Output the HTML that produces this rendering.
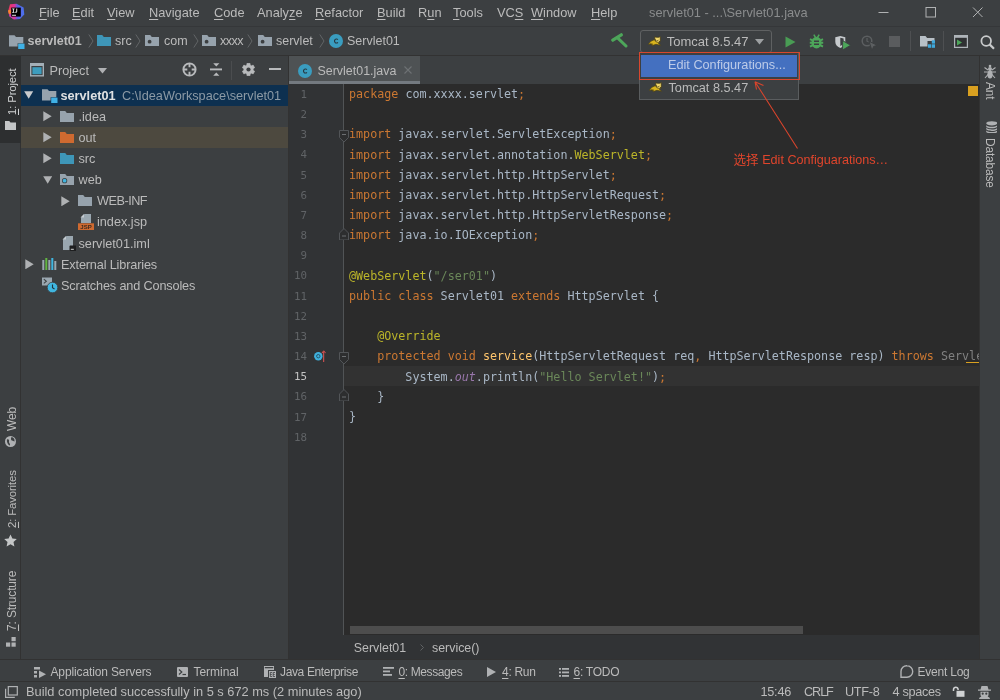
<!DOCTYPE html>
<html lang="en">
<head>
<meta charset="utf-8">
<title>servlet01 - Servlet01.java</title>
<style>
*{box-sizing:border-box;margin:0;padding:0}
html,body{width:1000px;height:700px;overflow:hidden;background:#3c3f41}
body{position:relative;font-family:"Liberation Sans","Noto Sans CJK SC",sans-serif;font-size:12.7px;color:#bbbbbb;-webkit-font-smoothing:antialiased}
#root{position:absolute;left:0;top:0;width:1000px;height:700px;will-change:transform}
.abs{position:absolute}
.t{position:absolute;white-space:pre;line-height:16px;height:16px}
u{text-decoration:underline;text-underline-offset:2px;text-decoration-thickness:1px}
/* menu */
#menubar{left:0;top:0;width:1000px;height:26px;background:#3c3f41}
#menubar .t{top:5px;font-size:12.8px;color:#bbbbbb}
/* navbar */
#navbar{left:0;top:26px;width:1000px;height:30px;background:#3c3f41;border-top:1px solid #353739;border-bottom:1px solid #323232}
#navbar .t{top:6px;font-size:12.5px}
/* stripes */
#lstripe{left:0;top:56px;width:21px;height:603px;background:#3c3f41;border-right:1px solid #323232}
#rstripe{left:979px;top:56px;width:21px;height:603px;background:#3c3f41;border-left:1px solid #323232}
.vt{position:absolute;white-space:pre;font-size:11.4px;letter-spacing:-0.15px;line-height:16px;height:16px;transform-origin:0 0}
/* project */
#proj{left:21px;top:56px;width:267px;height:603px;background:#3c3f41}
#projhead{left:0;top:0;width:267px;height:28px;background:#3c3f41}
.row{position:absolute;left:0;width:267px;height:21px}
.row .t{top:3px}
/* editor */
#editor{left:288px;top:56px;width:691px;height:603px;background:#2b2b2b;border-left:1px solid #323232}
#tabs{left:0;top:0;width:691px;height:28px;background:#3c3f41}
#gutter{left:0;top:28px;width:54px;height:551px;background:#313335}
#gline{left:54px;top:28px;width:1px;height:551px;background:#515456}
#code{left:0;top:28px;width:691px;height:552px;font-family:"DejaVu Sans Mono","Liberation Mono",monospace;font-size:11.71px;color:#a9b7c6}
.ln{position:absolute;left:0;width:690px;height:20px;line-height:20px;white-space:pre}
.ln i{position:absolute;left:5px;top:0.7px;font-style:normal;color:#606366;font-size:10.8px}
.ln b{position:absolute;left:60px;top:0;font-weight:normal}
.k{color:#cc7832}.a{color:#bbb529}.s{color:#6a8759}.f{color:#ffc66d}.p{color:#9876aa;font-style:italic}.g{color:#808080}
/* bottom */
#crumbs{left:0;top:579px;width:691px;height:24px;background:#313335}
#crumbs .t{font-size:12.4px}
#tabs .t{font-size:12.45px}
#toolbar{left:0;top:659px;width:1000px;height:22px;background:#3c3f41;border-top:1px solid #323232}
#toolbar .t{top:4px;font-size:12px;letter-spacing:-0.28px}
#status{left:0;top:681px;width:1000px;height:19px;background:#3c3f41;border-top:1px solid #323232}
#status .t{top:2px}
</style>
</head>
<body>
<div id="root">
<div id="menubar" class="abs">
<svg class="abs" style="left:0;top:0" width="32" height="26" viewBox="0 0 32 26"><defs><linearGradient id="lg1" x1="0" y1="0" x2="1" y2="0"><stop offset="0" stop-color="#f23a55"/><stop offset=".4" stop-color="#d9349a"/><stop offset=".58" stop-color="#5b60e2"/><stop offset="1" stop-color="#4a74ee"/></linearGradient></defs><path d="M10 4.300L16.500 3.700L23.600 7.600L24.300 14.600L20 19L14 19.500L9.600 16.600L8 11.500z" fill="url(#lg1)"/><path d="M8 10.600L10.600 9.400L11.200 13.600L9 14.200z" fill="#f58a2e"/><path d="M9 14.200L11.200 13.600L14 19.500L9.600 16.600z" fill="#c13cb0"/><rect x="11.200" y="7.600" width="9.600" height="9" fill="#000"/><rect x="12.100" y="14.800" width="3.900" height="0.900" fill="#fff"/><path d="M12.200 8.500h2.300v.8h-.7v2.600h.7v.8h-2.300v-.8h.7V9.300h-.7z" fill="#fff"/><path d="M16.300 8.500h.9v3c0 .8-.5 1.200-1.200 1.200-.5 0-.9-.2-1.100-.5l.5-.6c.2.200.3.300.6.300.2 0 .3-.2.300-.5z" fill="#fff"/></svg>
<span class="t" style="left:39px"><u>F</u>ile</span>
<span class="t" style="left:72px"><u>E</u>dit</span>
<span class="t" style="left:107px"><u>V</u>iew</span>
<span class="t" style="left:149px"><u>N</u>avigate</span>
<span class="t" style="left:214px"><u>C</u>ode</span>
<span class="t" style="left:257px">Analy<u>z</u>e</span>
<span class="t" style="left:315px"><u>R</u>efactor</span>
<span class="t" style="left:377px"><u>B</u>uild</span>
<span class="t" style="left:418px">R<u>u</u>n</span>
<span class="t" style="left:453px"><u>T</u>ools</span>
<span class="t" style="left:497px">VC<u>S</u></span>
<span class="t" style="left:531px"><u>W</u>indow</span>
<span class="t" style="left:591px"><u>H</u>elp</span>
<span class="t" id="wtitle" style="left:649px;color:#8a8c8d;font-size:12.8px">servlet01 - ...\Servlet01.java</span>
<svg class="abs" style="left:870px;top:0" width="130" height="26" viewBox="0 0 130 26" fill="none" stroke="#b0b2b3" stroke-width="1"><path d="M8.500 12.500h10"/><rect x="56" y="7.500" width="9.500" height="9.500"/><path d="M103 7.500l9.500 9.500M112.500 7.500l-9.500 9.500"/></svg>
</div>
<div id="navbar" class="abs">
<svg class="abs" style="left:9px;top:6.5px" width="16" height="15" viewBox="0 0 16 15" ><path d="M0 1.300h5.500l1.500 1.800H14.300v6.200H8.600v3.200H0z" fill="#97a3ad"/><rect x="9.200" y="9.600" width="6.300" height="5.400" fill="#3fb1e6"/></svg>
<span class="t" style="left:27.500px;font-weight:bold">servlet01</span>
<svg class="abs" style="left:87.5px;top:7px" width="6" height="14" viewBox="0 0 6 14" ><path d="M0.800 0.500L5 7L0.800 13.500" fill="none" stroke="#626567" stroke-width="1"/></svg>
<svg class="abs" style="left:97px;top:8px" width="14" height="11" viewBox="0 0 14 11" ><path d="M0 0h5.200l1.600 2H14v9H0z" fill="#3e96b8"/></svg>
<span class="t" style="left:115px">src</span>
<svg class="abs" style="left:134.5px;top:7px" width="6" height="14" viewBox="0 0 6 14" ><path d="M0.800 0.500L5 7L0.800 13.500" fill="none" stroke="#626567" stroke-width="1"/></svg>
<svg class="abs" style="left:145px;top:8px" width="14" height="11" viewBox="0 0 14 11" ><path d="M0 0h5.200l1.600 2H14v9H0z" fill="#97a3ad"/><circle cx="4.600" cy="6.700" r="1.900" fill="#3c3f41"/></svg>
<span class="t" style="left:164px">com</span>
<svg class="abs" style="left:192.5px;top:7px" width="6" height="14" viewBox="0 0 6 14" ><path d="M0.800 0.500L5 7L0.800 13.500" fill="none" stroke="#626567" stroke-width="1"/></svg>
<svg class="abs" style="left:202px;top:8px" width="14" height="11" viewBox="0 0 14 11" ><path d="M0 0h5.200l1.600 2H14v9H0z" fill="#97a3ad"/><circle cx="4.600" cy="6.700" r="1.900" fill="#3c3f41"/></svg>
<span class="t" style="left:220px;letter-spacing:-0.500px">xxxx</span>
<svg class="abs" style="left:247px;top:7px" width="6" height="14" viewBox="0 0 6 14" ><path d="M0.800 0.500L5 7L0.800 13.500" fill="none" stroke="#626567" stroke-width="1"/></svg>
<svg class="abs" style="left:257.5px;top:8px" width="14" height="11" viewBox="0 0 14 11" ><path d="M0 0h5.200l1.600 2H14v9H0z" fill="#97a3ad"/><circle cx="4.600" cy="6.700" r="1.900" fill="#3c3f41"/></svg>
<span class="t" style="left:276px">servlet</span>
<svg class="abs" style="left:319px;top:7px" width="6" height="14" viewBox="0 0 6 14" ><path d="M0.800 0.500L5 7L0.800 13.500" fill="none" stroke="#626567" stroke-width="1"/></svg>
<svg class="abs" style="left:328.5px;top:7px" width="14" height="14" viewBox="0 0 14 14" ><circle cx="7" cy="7" r="7" fill="#3a9dc0"/><path d="M9.300 8.700c-.5.600-1.100.9-1.900.9-1.400 0-2.400-1.100-2.400-2.600s1-2.600 2.400-2.600c.8 0 1.400.3 1.900.8l-.7.800c-.3-.4-.7-.5-1.200-.5-.8 0-1.300.7-1.300 1.500s.5 1.500 1.300 1.500c.5 0 .9-.2 1.200-.6z" fill="#26343b"/></svg>
<span class="t" style="left:347px">Servlet01</span>
<svg class="abs" style="left:611px;top:6px" width="17" height="16" viewBox="0 0 17 16" ><path d="M1.800 7.200L10.300 1.800" stroke="#4da65a" stroke-width="3.200" stroke-linecap="round"/><path d="M6.300 4.700L15 13" stroke="#4da65a" stroke-width="3" stroke-linecap="round"/></svg>
<div class="abs" style="left:640px;top:3.1999999999999993px;width:131.500px;height:22.500px;border:1px solid #5f6162;border-radius:3px;background:#3c3f41"></div>
<svg class="abs" style="left:648.3px;top:9.200000000000003px" width="13.5" height="10" viewBox="0 0 13.5 10" ><path d="M0.300 8.300L2.800 5.300L6.600 3.600L12.300 5.800L10.300 7L12.500 9.300L8 8.300L4.200 9.600L3 8z" fill="#d8b41e" stroke="#4d4214" stroke-width=".7" stroke-linejoin="round"/><path d="M6.800 0.800L8.300 1.300L10.800 1.300L12.300 0.600L12.300 4.800L10.500 6.300L8.300 6L6.800 4.300z" fill="#efd66a" stroke="#3d3410" stroke-width=".7" stroke-linejoin="round"/><path d="M7.200 3.300L8.200 5.200M9.500 4.800l.8-.9" stroke="#2a2308" stroke-width=".9" fill="none"/><path d="M2.500 7.800L5 8.300" stroke="#3d3410" stroke-width=".8"/></svg>
<span class="t" style="left:666.800px;top:6.700px;font-size:13px">Tomcat 8.5.47</span>
<svg class="abs" style="left:755px;top:12px" width="9" height="6" viewBox="0 0 9 6" ><path d="M0 0h9L4.500 5.500z" fill="#9da0a2"/></svg>
<svg class="abs" style="left:785px;top:8.5px" width="11" height="12" viewBox="0 0 11 12" ><path d="M0.500 0.500L10.500 6L0.500 11.500z" fill="#499c54"/></svg>
<svg class="abs" style="left:808.5px;top:7.200000000000003px" width="15" height="15" viewBox="0 0 15 15" ><ellipse cx="7.500" cy="8.600" rx="5" ry="5.900" fill="#4da65a"/><path d="M4.800 0.600L6.500 3.300M10.200 0.600L8.500 3.300" stroke="#4da65a" stroke-width="1.500"/><path d="M1 5.200L4 6.600M14 5.200L11 6.600M0.800 8.800h13.400M1 12.600L4 11M14 12.600L11 11" stroke="#4da65a" stroke-width="2" fill="none"/><path d="M5 7.200h5M5 10.300h5" stroke="#3c3f41" stroke-width="1.400"/></svg>
<svg class="abs" style="left:834.5px;top:8.5px" width="16" height="14" viewBox="0 0 16 14" ><path d="M0.300 1.200L5.300 0L10.300 1.200V6C10.300 9 8 10.800 5.300 12C2.600 10.800 0.300 9 0.300 6z" fill="#c6cacd"/><path d="M5.300 1.800L8.600 2.600V6C8.600 7.800 7.200 9.200 5.300 10z" fill="#3c3f41"/><path d="M7.600 4.600L15.600 9.300L7.600 14z" fill="#4da65a" stroke="#3c3f41" stroke-width=".9"/></svg>
<svg class="abs" style="left:860.5px;top:8px" width="17" height="16" viewBox="0 0 17 16" ><circle cx="6" cy="6" r="4.800" fill="none" stroke="#5c5f61" stroke-width="1.500"/><path d="M6 3v3.200l2 .8" fill="none" stroke="#5c5f61" stroke-width="1.200"/><path d="M8 6.300L16.300 10.300L12.600 11.500L11 15.600z" fill="#5c5f61" stroke="#3c3f41" stroke-width="1"/></svg>
<div class="abs" style="left:889.200px;top:9.399999999999999px;width:10.500px;height:10.200px;background:#5a5c5e"></div>
<div class="abs" style="left:910px;top:4px;width:1px;height:20px;background:#4e5052"></div>
<svg class="abs" style="left:920px;top:9px" width="16" height="13" viewBox="0 0 16 13" ><path d="M0 0h5.500l1.600 2H14.500v3H7.500V10.500H0z" fill="#b8c0c6"/><rect x="11.800" y="4.300" width="3.200" height="3.300" fill="#3fa9dc"/><rect x="8" y="8.300" width="3.200" height="3.500" fill="#3fa9dc"/><rect x="11.800" y="8.300" width="3.200" height="3.500" fill="#3fa9dc"/></svg>
<div class="abs" style="left:943px;top:4px;width:1px;height:20px;background:#4e5052"></div>
<svg class="abs" style="left:954px;top:8px" width="14" height="13" viewBox="0 0 14 13" ><path d="M0.600 0.600h12.800v11.800H0.600z" fill="#2f3133" stroke="#aeb4b9" stroke-width="1.200"/><rect x="0" y="0" width="14" height="2.800" fill="#aeb4b9"/><path d="M3 4.600L8 7.600L3 10.600z" fill="#4da65a"/></svg>
<svg class="abs" style="left:979.5px;top:7.5px" width="15" height="15" viewBox="0 0 15 15" ><circle cx="6.200" cy="6" r="4.800" fill="none" stroke="#c8cacb" stroke-width="1.800"/><path d="M9.600 9.400L14 13.800" stroke="#c8cacb" stroke-width="2.200"/></svg>
</div>
<div id="lstripe" class="abs">
<div class="abs" style="left:0;top:0;width:21px;height:87px;background:#2d2f30"></div>
<span class="vt" style="left:4.3px;top:59.3px;transform:rotate(-90deg);color:#d0d2d3"><u>1</u>: Project</span>
<svg class="abs" style="left:5px;top:65px" width="11" height="9" viewBox="0 0 11 9" ><path d="M0 0h4.200l1.300 1.600H11V9H0z" fill="#c4c6c7"/></svg>
<span class="vt" style="left:4px;top:375px;transform:rotate(-90deg);font-size:12px">Web</span>
<svg class="abs" style="left:4.8px;top:379.7px" width="12" height="12" viewBox="0 0 12 12" ><circle cx="5.500" cy="5.500" r="5.500" fill="#afb1b3"/><path d="M2 3.500C3.500 3 4.500 4 4 5.500S5.500 7.500 5 9.500C3 9 1.500 6 2 3.500zM6.500 1C8.500 1.500 10 3 9.500 5.500C8.500 5.500 8 4.500 7 4.500S5.500 2.500 6.500 1z" fill="#3c3f41"/></svg>
<span class="vt" style="left:4.3px;top:472.29999999999995px;transform:rotate(-90deg);"><u>2</u>: Favorites</span>
<svg class="abs" style="left:4.3px;top:477.5px" width="13" height="13" viewBox="0 0 13 13" ><path d="M6.500 0.500L8.400 4.600L12.800 5.100L9.500 8.100L10.400 12.500L6.500 10.300L2.600 12.500L3.500 8.100L0.200 5.100L4.600 4.600z" fill="#c4c6c7"/></svg>
<span class="vt" style="left:4px;top:575px;transform:rotate(-90deg);font-size:12px"><u>7</u>: Structure</span>
<svg class="abs" style="left:5.5px;top:580.8px" width="11" height="11" viewBox="0 0 11 11" ><rect x="5.500" y="0" width="4.200" height="4.200" fill="#afb1b3"/><rect x="0" y="5.500" width="4.200" height="4.200" fill="#afb1b3"/><rect x="5.500" y="5.500" width="4.200" height="4.200" fill="#afb1b3"/></svg>
</div>
<div id="proj" class="abs">
<div id="projhead" class="abs">
<svg class="abs" style="left:9px;top:7.2px" width="14" height="13.5" viewBox="0 0 14 13.5" ><rect x="0.700" y="0.700" width="12.600" height="12.100" fill="#3c3f41" stroke="#a3afb7" stroke-width="1.400"/><rect x="0" y="0" width="14" height="3" fill="#a3afb7"/><rect x="2.400" y="4.200" width="9.200" height="7" fill="#3d9cbd"/></svg>
<span class="t" style="left:28.5px;top:6.6px">Project</span>
<svg class="abs" style="left:77.3px;top:12.2px" width="9.3" height="6" viewBox="0 0 9.3 6" ><path d="M0 0h9L4.500 5.500z" fill="#afb1b3"/></svg>
<svg class="abs" style="left:160.7px;top:5.7px" width="15" height="15" viewBox="0 0 15 15" ><circle cx="7.500" cy="7.500" r="6.100" fill="none" stroke="#b8babc" stroke-width="1.900"/><path d="M7.500 1v4.300M7.500 9.700v4.300M1 7.500h4.300M9.700 7.500h4.300" stroke="#b8babc" stroke-width="1.900"/></svg>
<svg class="abs" style="left:188.5px;top:7px" width="12.5" height="13" viewBox="0 0 12.5 13" ><path d="M0 6.400h12.500" stroke="#b8babc" stroke-width="1.900"/><path d="M3.200 0.200h6.200L6.300 3.400zM3.200 12.800h6.200L6.300 9.600z" fill="#b8babc"/></svg>
<div class="abs" style="left:210px;top:5px;width:1px;height:19px;background:#4b4d4f"></div>
<svg class="abs" style="left:221.1px;top:6.7px" width="13" height="13" viewBox="0 0 13 13" ><path d="M4.84 2.10L4.98 0.28L8.02 0.28L8.16 2.10L9.48 2.87L11.12 2.07L12.64 4.71L11.14 5.73L11.14 7.27L12.64 8.29L11.12 10.93L9.48 10.13L8.16 10.90L8.02 12.72L4.98 12.72L4.84 10.90L3.52 10.13L1.88 10.93L0.36 8.29L1.86 7.27L1.86 5.73L0.36 4.71L1.88 2.07L3.52 2.87z" fill="#b8babc" stroke="#b8babc" stroke-width=".6" stroke-linejoin="round"/><circle cx="6.500" cy="6.500" r="2.100" fill="#3c3f41"/></svg>
<div class="abs" style="left:248px;top:12.3px;width:12px;height:2px;background:#b8babc"></div>
</div>
<div class="row" style="top:28.8px;height:21.1px;background:#0d3050;"><svg class="abs" style="left:3.2px;top:6.35px" width="9.4" height="8" viewBox="0 0 9.4 8" ><path d="M0.200 0.300L9.200 0.300L4.700 7.800z" fill="#c8cacc"/></svg><svg class="abs" style="left:21px;top:3.55px" width="16" height="15" viewBox="0 0 16 15" ><path d="M0 1.300h5.500l1.500 1.800H14.300v6.200H8.600v3.200H0z" fill="#97a3ad"/><rect x="9.200" y="9.600" width="6.300" height="5.400" fill="#3fb1e6"/></svg><span class="t" style="left:39.5px;font-weight:bold;color:#dfe1e2">servlet01</span><span class="t" style="left:101px;color:#8c9aa5">C:\IdeaWorkspace\servlet01</span></div>
<div class="row" style="top:49.9px;height:21.1px;"><svg class="abs" style="left:21.5px;top:5.25px" width="9" height="10.6" viewBox="0 0 9 10.6" ><path d="M0.300 0.300L8.700 5.300L0.300 10.300z" fill="#afb1b3"/></svg><svg class="abs" style="left:39px;top:5.05px" width="14" height="11" viewBox="0 0 14 11" ><path d="M0 0h5.200l1.600 2H14v9H0z" fill="#97a3ad"/></svg><span class="t" style="left:57.5px">.idea</span></div>
<div class="row" style="top:71.0px;height:21.1px;background:#4d493f;"><svg class="abs" style="left:21.5px;top:5.25px" width="9" height="10.6" viewBox="0 0 9 10.6" ><path d="M0.300 0.300L8.700 5.300L0.300 10.300z" fill="#afb1b3"/></svg><svg class="abs" style="left:39px;top:5.05px" width="14" height="11" viewBox="0 0 14 11" ><path d="M0 0h5.200l1.600 2H14v9H0z" fill="#cf6a30"/></svg><span class="t" style="left:57.5px">out</span></div>
<div class="row" style="top:92.1px;height:21.1px;"><svg class="abs" style="left:21.5px;top:5.25px" width="9" height="10.6" viewBox="0 0 9 10.6" ><path d="M0.300 0.300L8.700 5.300L0.300 10.300z" fill="#afb1b3"/></svg><svg class="abs" style="left:39px;top:5.05px" width="14" height="11" viewBox="0 0 14 11" ><path d="M0 0h5.200l1.600 2H14v9H0z" fill="#3e96b8"/></svg><span class="t" style="left:57.5px">src</span></div>
<div class="row" style="top:113.2px;height:21.1px;"><svg class="abs" style="left:21.5px;top:7.05px" width="9.4" height="8" viewBox="0 0 9.4 8" ><path d="M0.200 0.300L9.200 0.300L4.700 7.800z" fill="#afb1b3"/></svg><svg class="abs" style="left:39px;top:5.05px" width="14" height="11" viewBox="0 0 14 11" ><path d="M0 0h5.200l1.600 2H14v9H0z" fill="#97a3ad"/><circle cx="4.600" cy="6.700" r="2.600" fill="#3c3f41"/><circle cx="4.600" cy="6.700" r="1.900" fill="#41b4e0"/></svg><span class="t" style="left:57.5px">web</span></div>
<div class="row" style="top:134.3px;height:21.1px;"><svg class="abs" style="left:39.5px;top:5.25px" width="9" height="10.6" viewBox="0 0 9 10.6" ><path d="M0.300 0.300L8.700 5.300L0.300 10.300z" fill="#afb1b3"/></svg><svg class="abs" style="left:57px;top:5.05px" width="14" height="11" viewBox="0 0 14 11" ><path d="M0 0h5.200l1.600 2H14v9H0z" fill="#97a3ad"/></svg><span class="t" style="left:76px;letter-spacing:-0.500px">WEB-INF</span></div>
<div class="row" style="top:155.4px;height:21.1px;"><svg class="abs" style="left:57px;top:3.05px" width="16" height="16" viewBox="0 0 16 16" ><path d="M6.500 0H13v9H3V3.500z" fill="#9aa7b0"/><path d="M6 0v3.500H2.500z" fill="#c5ccd1"/><rect x="0" y="9.300" width="16" height="6.700" fill="#cf6a30"/><text x="8" y="15" font-size="6" font-weight="bold" text-anchor="middle" fill="#3c2a1f" font-family="Liberation Sans,sans-serif">JSP</text></svg><span class="t" style="left:76px">index.jsp</span></div>
<div class="row" style="top:176.5px;height:21.1px;"><svg class="abs" style="left:41px;top:3.05px" width="14" height="15" viewBox="0 0 14 15" ><path d="M4.500 0H11v10H7.500v4H1V3.500z" fill="#9aa7b0"/><path d="M4 0v3.500H0.500z" fill="#c5ccd1"/><rect x="7.800" y="9.500" width="6.200" height="5.500" fill="#1e1f20"/><rect x="8.800" y="12.800" width="3" height="1" fill="#d0d2d3"/></svg><span class="t" style="left:57.5px">servlet01.iml</span></div>
<div class="row" style="top:197.6px;height:21.1px;"><svg class="abs" style="left:3.5px;top:5.25px" width="9" height="10.6" viewBox="0 0 9 10.6" ><path d="M0.300 0.300L8.700 5.300L0.300 10.300z" fill="#afb1b3"/></svg><svg class="abs" style="left:21px;top:4.55px" width="15" height="12" viewBox="0 0 15 12" ><rect x="0.300" y="2" width="2" height="10" fill="#9aa7b0"/><rect x="3.300" y="0" width="2" height="12" fill="#62b543"/><rect x="6.300" y="2" width="2" height="10" fill="#9aa7b0"/><rect x="9.300" y="0" width="2" height="12" fill="#40b6e0"/><rect x="12.300" y="3" width="2" height="9" fill="#9aa7b0"/></svg><span class="t" style="left:40px;letter-spacing:-0.150px">External Libraries</span></div>
<div class="row" style="top:218.7px;height:21.1px;"><svg class="abs" style="left:21px;top:2.55px" width="16" height="16" viewBox="0 0 16 16" ><path d="M0 0.500h10v8H0z" fill="#9aa7b0"/><path d="M1.800 2.200L4.300 4.300L1.800 6.400" stroke="#3c3f41" stroke-width="1.100" fill="none"/><circle cx="10.500" cy="10.500" r="5.300" fill="#40b6e0" stroke="#3c3f41" stroke-width=".8"/><path d="M10.500 7.500v3.300l2 1.200" stroke="#20323b" stroke-width="1.100" fill="none"/></svg><span class="t" style="left:40px;letter-spacing:-0.150px">Scratches and Consoles</span></div>
</div>
<div id="editor" class="abs">
<div id="tabs" class="abs">
<div class="abs" style="left:0;top:0;width:131px;height:27.800px;background:#4e5254;border-bottom:3.200px solid #747a80"></div>
<svg class="abs" style="left:9px;top:8px" width="14" height="14" viewBox="0 0 14 14" ><circle cx="7" cy="7" r="7" fill="#3a9dc0"/><path d="M9.300 8.700c-.5.600-1.100.9-1.900.9-1.400 0-2.400-1.100-2.400-2.600s1-2.600 2.400-2.600c.8 0 1.400.3 1.900.8l-.7.800c-.3-.4-.7-.5-1.200-.5-.8 0-1.300.7-1.300 1.500s.5 1.500 1.300 1.500c.5 0 .9-.2 1.200-.6z" fill="#26343b"/></svg>
<span class="t" style="left:28.5px;top:6.5px">Servlet01.java</span>
<svg class="abs" style="left:115px;top:9.5px" width="8" height="8" viewBox="0 0 8 8" ><path d="M0.500 0.500l7 7M7.500 0.500l-7 7" stroke="#6e7274" stroke-width="1.100" fill="none"/></svg>
</div>
<div id="gutter" class="abs"></div><div id="gline" class="abs"></div>
<div id="code" class="abs">
<div class="abs" style="left:55px;top:282.12px;width:636px;height:20.18px;background:#323232"></div>
<div class="ln" style="top:0.1px"><i> 1</i><b><span class="k">package </span>com.xxxx.servlet<span class="k">;</span></b></div>
<div class="ln" style="top:20.28px"><i> 2</i><b></b></div>
<div class="ln" style="top:40.46px"><i> 3</i><b><span class="k">import </span>javax.servlet.ServletException<span class="k">;</span></b></div>
<div class="ln" style="top:60.64px"><i> 4</i><b><span class="k">import </span>javax.servlet.annotation.<span class="a">WebServlet</span><span class="k">;</span></b></div>
<div class="ln" style="top:80.82px"><i> 5</i><b><span class="k">import </span>javax.servlet.http.HttpServlet<span class="k">;</span></b></div>
<div class="ln" style="top:101.0px"><i> 6</i><b><span class="k">import </span>javax.servlet.http.HttpServletRequest<span class="k">;</span></b></div>
<div class="ln" style="top:121.18px"><i> 7</i><b><span class="k">import </span>javax.servlet.http.HttpServletResponse<span class="k">;</span></b></div>
<div class="ln" style="top:141.36px"><i> 8</i><b><span class="k">import </span>java.io.IOException<span class="k">;</span></b></div>
<div class="ln" style="top:161.54px"><i> 9</i><b></b></div>
<div class="ln" style="top:181.72px"><i>10</i><b><span class="a">@WebServlet</span>(<span class="s">"/ser01"</span>)</b></div>
<div class="ln" style="top:201.9px"><i>11</i><b><span class="k">public class </span>Servlet01 <span class="k">extends </span>HttpServlet {</b></div>
<div class="ln" style="top:222.08px"><i>12</i><b></b></div>
<div class="ln" style="top:242.26px"><i>13</i><b>    <span class="a">@Override</span></b></div>
<div class="ln" style="top:262.44px"><i>14</i><b>    <span class="k">protected void </span><span class="f">service</span>(HttpServletRequest req<span class="k">, </span>HttpServletResponse resp) <span class="k">throws </span><span class="g">Servle</span></b></div>
<div class="ln" style="top:282.62px"><i style="color:#c2c2c2">15</i><b>        System.<span class="p">out</span>.println(<span class="s">"Hello Servlet!"</span>)<span class="k">;</span></b></div>
<div class="ln" style="top:302.8px"><i>16</i><b>    }</b></div>
<div class="ln" style="top:322.98px"><i>17</i><b>}</b></div>
<div class="ln" style="top:343.16px"><i>18</i><b></b></div>
<svg class="abs" style="left:50px;top:45.75px" width="10" height="12.5" viewBox="0 0 10 12.5" ><path d="M0.500 0.500h9v7L5 12L0.500 7.500z" fill="#2d2e2f" stroke="#525558" stroke-width="1"/><path d="M3 4.500h4" stroke="#6c6f72" stroke-width="1"/></svg>
<svg class="abs" style="left:50px;top:143.55px" width="10" height="12.5" viewBox="0 0 10 12.5" ><path d="M0.500 12h9v-7L5 0.500L0.500 5z" fill="#2d2e2f" stroke="#525558" stroke-width="1"/><path d="M3 8h4" stroke="#6c6f72" stroke-width="1"/></svg>
<svg class="abs" style="left:50px;top:267.73px" width="10" height="12.5" viewBox="0 0 10 12.5" ><path d="M0.500 0.500h9v7L5 12L0.500 7.500z" fill="#2d2e2f" stroke="#525558" stroke-width="1"/><path d="M3 4.500h4" stroke="#6c6f72" stroke-width="1"/></svg>
<svg class="abs" style="left:50px;top:304.99px" width="10" height="12.5" viewBox="0 0 10 12.5" ><path d="M0.500 12h9v-7L5 0.500L0.500 5z" fill="#2d2e2f" stroke="#525558" stroke-width="1"/><path d="M3 8h4" stroke="#6c6f72" stroke-width="1"/></svg>
<svg class="abs" style="left:25px;top:266.23px" width="12" height="13" viewBox="0 0 12 13" ><circle cx="4.300" cy="6.200" r="4.200" fill="#3fb0dc"/><circle cx="4.300" cy="6.200" r="1.700" fill="none" stroke="#23566b" stroke-width="1"/><path d="M9.700 12V1.500M7.800 3.200L9.700 0.800L11.600 3.200" stroke="#e05555" stroke-width="1" fill="none"/></svg>
</div>
<div class="abs" style="left:61px;top:569.5px;width:453px;height:8.500px;background:#4d4d4d"></div>
<div class="abs" style="left:678.5px;top:29.5px;width:10.500px;height:10.500px;background:#d9a020"></div>
<div class="abs" style="left:677px;top:305.5px;width:14px;height:1.500px;background:#d9a020"></div>
<div id="crumbs" class="abs"><span class="t" style="left:64.8px;top:4.700px">Servlet01</span><svg class="abs" style="left:131px;top:8.5px" width="4" height="7" viewBox="0 0 4 7" ><path d="M0.500 0.500L3.500 3.500L0.500 6.500" fill="none" stroke="#606365" stroke-width="1"/></svg><span class="t" style="left:143px;top:4.700px">service()</span></div>
</div>
<div id="rstripe" class="abs">
<svg class="abs" style="left:4px;top:8px" width="12" height="16" viewBox="0 0 12 16" ><ellipse cx="6" cy="10.500" rx="2.600" ry="4" fill="#afb1b3"/><circle cx="6" cy="5" r="2" fill="#afb1b3"/><circle cx="6" cy="2" r="1.300" fill="#afb1b3"/><path d="M0.500 3.500L4 6M11.500 3.500L8 6M0 8h12M1 14L4.500 10M11 14L7.500 10" stroke="#afb1b3" stroke-width="1.100" fill="none"/></svg>
<span class="vt" style="left:17.799999999999955px;top:26.299999999999997px;transform:rotate(90deg);font-size:11.900px">Ant</span>
<svg class="abs" style="left:5.600000000000023px;top:64.8px" width="11.6" height="12.6" viewBox="0 0 11.6 12.6" ><ellipse cx="5.800" cy="2.300" rx="5.600" ry="2.100" fill="#afb1b3"/><path d="M0.200 3.700c0 2.800 11.200 2.800 11.200 0v1.500c0 2.800-11.200 2.800-11.200 0zM0.200 6.300c0 2.800 11.200 2.800 11.200 0v1.500c0 2.800-11.200 2.800-11.200 0zM0.200 8.900c0 2.800 11.200 2.800 11.200 0v1.500c0 2.800-11.200 2.800-11.200 0z" fill="#afb1b3"/></svg>
<span class="vt" style="left:17.799999999999955px;top:81.6px;transform:rotate(90deg);font-size:11.900px">Database</span>
</div>
<div id="toolbar" class="abs">
<svg class="abs" style="left:34px;top:6.5px" width="12" height="11" viewBox="0 0 12 11" ><rect x="0" y="0" width="6" height="2.500" fill="#afb1b3"/><rect x="0" y="4" width="3" height="2.500" fill="#afb1b3"/><rect x="0" y="8" width="3" height="2.500" fill="#afb1b3"/><path d="M5 3.500L12 7.200L5 11z" fill="#afb1b3"/></svg>
<span class="t" style="left:50.500px;letter-spacing:-0.13px">Application Servers</span>
<svg class="abs" style="left:177px;top:7px" width="11" height="10" viewBox="0 0 11 10" ><rect x="0" y="0" width="11" height="10" rx="1" fill="#afb1b3"/><path d="M2 2.500L4.800 5L2 7.500" stroke="#3c3f41" stroke-width="1.200" fill="none"/><path d="M5.500 7.500h3.500" stroke="#3c3f41" stroke-width="1.200"/></svg>
<span class="t" style="left:193.500px;letter-spacing:-0.04px">Terminal</span>
<svg class="abs" style="left:264px;top:6px" width="12" height="12" viewBox="0 0 12 12" ><path d="M0 0h10v4H4v7H0z" fill="#afb1b3"/><rect x="0.800" y="1" width="8.400" height="1.300" fill="#3c3f41"/><rect x="5" y="5" width="7" height="7" fill="#afb1b3"/><path d="M6.300 6.500h1.800M6.300 8.500h1.500M6.300 10.500h1.800M6.300 6.500v4M9.200 6.500h1.800M9.200 8.500h1.500M9.200 10.500h1.800M9.200 6.500v4" stroke="#3c3f41" stroke-width=".8" fill="none"/></svg>
<span class="t" style="left:280px;letter-spacing:-0.36px">Java Enterprise</span>
<svg class="abs" style="left:382.5px;top:7px" width="11" height="9" viewBox="0 0 11 9" ><rect x="0" y="0" width="11" height="1.800" fill="#afb1b3"/><rect x="0" y="3.500" width="7" height="1.800" fill="#afb1b3"/><rect x="0" y="7" width="9" height="1.800" fill="#afb1b3"/></svg>
<span class="t" style="left:398.500px;letter-spacing:-0.39px"><u>0</u>: Messages</span>
<svg class="abs" style="left:487px;top:7px" width="9" height="10" viewBox="0 0 9 10" ><path d="M0 0L9 5L0 10z" fill="#afb1b3"/></svg>
<span class="t" style="left:502px;letter-spacing:-0.31px"><u>4</u>: Run</span>
<svg class="abs" style="left:558.5px;top:7.5px" width="10" height="9" viewBox="0 0 10 9" ><rect x="0" y="0" width="2" height="1.800" fill="#afb1b3"/><rect x="3" y="0" width="7" height="1.800" fill="#afb1b3"/><rect x="0" y="3.500" width="2" height="1.800" fill="#afb1b3"/><rect x="3" y="3.500" width="7" height="1.800" fill="#afb1b3"/><rect x="0" y="7" width="2" height="1.800" fill="#afb1b3"/><rect x="3" y="7" width="7" height="1.800" fill="#afb1b3"/></svg>
<span class="t" style="left:573.500px;letter-spacing:-0.26px"><u>6</u>: TODO</span>
<svg class="abs" style="left:900px;top:5px" width="14" height="13" viewBox="0 0 14 13" ><path d="M7 0.800A5.700 5.700 0 1 1 7 12.200H1V6.500A5.700 5.700 0 0 1 7 0.800z" fill="none" stroke="#afb1b3" stroke-width="1.400"/></svg>
<span class="t" style="left:917.500px;letter-spacing:-0.22px">Event Log</span>
</div>
<div id="status" class="abs">
<svg class="abs" style="left:4.5px;top:4px" width="13" height="12" viewBox="0 0 13 12" ><rect x="3.300" y="0.600" width="9" height="8.400" fill="none" stroke="#afb1b3" stroke-width="1.200"/><path d="M0.600 2.800v8.600h9.200" fill="none" stroke="#afb1b3" stroke-width="1.200"/></svg>
<span class="t" style="left:26px;font-size:12.800px">Build completed successfully in 5 s 672 ms (2 minutes ago)</span>
<span class="t" style="left:760.500px;letter-spacing:-0.250px">15:46</span>
<span class="t" style="left:804px;letter-spacing:-1.100px">CRLF</span>
<span class="t" style="left:845px;letter-spacing:-0.300px">UTF-8</span>
<span class="t" style="left:892.500px;letter-spacing:-0.300px">4 spaces</span>
<svg class="abs" style="left:952px;top:4px" width="13" height="11" viewBox="0 0 13 11" ><path d="M1.500 5V3.500a2.300 2.300 0 0 1 4.600 0V4" fill="none" stroke="#d0d2d3" stroke-width="1.500"/><rect x="4.500" y="4.800" width="8" height="6" fill="#d0d2d3"/></svg>
<svg class="abs" style="left:977.5px;top:3.5px" width="13" height="13" viewBox="0 0 13 13" ><path d="M3.500 0h6l1 3.500h2.500v1.300H0V3.500h2.500z" fill="#afb1b3"/><path d="M2.500 5.800h8v2.400a4 4 0 0 1-8 0z" fill="#afb1b3"/><circle cx="4.700" cy="7.700" r="1.100" fill="#3c3f41"/><circle cx="8.300" cy="7.700" r="1.100" fill="#3c3f41"/><path d="M1 13c0-1.800 2-2.500 5.500-2.500S12 11.200 12 13z" fill="#afb1b3"/></svg>
</div>
<div class="abs" style="left:639px;top:52px;width:160px;height:48px;background:#3c3f41;border:1px solid #5a5d5f"></div>
<div class="abs" style="left:640.500px;top:54.500px;width:156.200px;height:22px;background:#4470c0"></div>
<div class="abs" style="left:638.800px;top:52px;width:161.200px;height:27.800px;border:1.700px solid #d8472e"></div>
<span class="t" style="left:668px;top:57px;color:#bdcbe8">Edit Configurations...</span>
<svg class="abs" style="left:648.8px;top:81.8px" width="13.5" height="10" viewBox="0 0 13.5 10" ><path d="M0.300 8.300L2.800 5.300L6.600 3.600L12.300 5.800L10.300 7L12.500 9.300L8 8.300L4.200 9.600L3 8z" fill="#d8b41e" stroke="#4d4214" stroke-width=".7" stroke-linejoin="round"/><path d="M6.800 0.800L8.300 1.300L10.800 1.300L12.300 0.600L12.300 4.800L10.500 6.300L8.300 6L6.800 4.300z" fill="#efd66a" stroke="#3d3410" stroke-width=".7" stroke-linejoin="round"/><path d="M7.200 3.300L8.200 5.200M9.500 4.800l.8-.9" stroke="#2a2308" stroke-width=".9" fill="none"/><path d="M2.500 7.800L5 8.300" stroke="#3d3410" stroke-width=".8"/></svg>
<span class="t" style="left:668.500px;top:79.500px">Tomcat 8.5.47</span>
<svg class="abs" style="left:740px;top:70px" width="80" height="90" viewBox="0 0 80 90"><path d="M57.500 78.500L15 11.700M15 11.700L23.500 15.500M15 11.700L16.500 19.500" stroke="#d8442c" stroke-width="1.100" fill="none"/></svg>
<span class="t" style="left:733.500px;top:151.700px;color:#e0452c;font-size:12.600px">选择 Edit Configuarations…</span>
</div>
</body>
</html>
